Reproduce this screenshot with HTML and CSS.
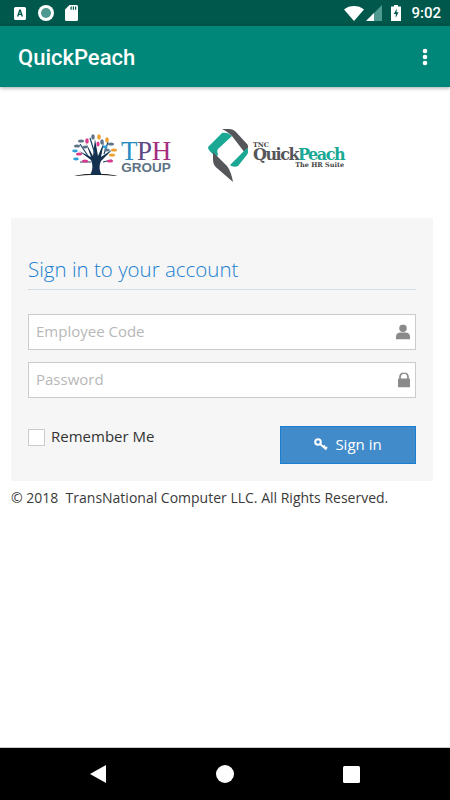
FILE: index.html
```html
<!DOCTYPE html>
<html lang="en">
<head>
  <meta charset="UTF-8">
  <meta name="viewport" content="width=device-width, initial-scale=1">
  <title>QuickPeach</title>
  <link rel="stylesheet" href="styles.css">
</head>
<body>
  <div class="phone">
    <div class="statusbar">
      <div class="status-left">
        <svg class="ic-a" width="12" height="13" viewBox="0 0 12 13"><path d="M1.500 0h9A1.500 1.500 0 0 1 12 1.500v10a1.500 1.500 0 0 1-1.500 1.500h-9A1.500 1.500 0 0 1 0 11.500v-10A1.500 1.500 0 0 1 1.500 0z" fill="#fff"/><path d="M5.200 2.500 3 9.500h1.500l.4-1.400h2.200l.4 1.400H9L6.800 2.500zM5.300 6.800 6 4.500l.7 2.300z" fill="#00574b"/></svg>
        <svg width="16" height="16" viewBox="0 0 16 16"><circle cx="8" cy="8" r="8" fill="#fff"/><circle cx="8" cy="8" r="5" fill="#4f9a90"/></svg>
        <svg width="13" height="16" viewBox="0 0 13 16"><path d="M4.500 0H11.500A1.500 1.500 0 0 1 13 1.500V14.500A1.500 1.500 0 0 1 11.500 16H1.500A1.500 1.500 0 0 1 0 14.500V4.500z" fill="#fff"/><path d="M5.500 1.500h1.200v3.300H5.500zM7.800 1.500H9v3.300H7.800zM10 1.500h1.200v3.300H10z" fill="#00574b"/></svg>
      </div>
      <div class="status-right">
        <svg width="20" height="15" viewBox="0 0 20 15"><path d="M0 3.500C5.500-1.100 14.500-1.100 20 3.500L10 15z" fill="#fff"/></svg>
        <svg class="ic-signal" width="16" height="16" viewBox="0 0 16 16"><path d="M16 0V16H0z" fill="#4f9a90"/><path d="M8 8V16H0z" fill="#fff"/></svg>
        <svg class="ic-batt" width="10" height="16" viewBox="0 0 10 16"><path d="M3 0h4v1.500h3V16H0V1.500h3z" fill="#fff"/><path d="M5.800 3.500 2.800 9h2v3.800L7.500 7.300H5.500z" fill="#00574b"/></svg>
        <span class="clock">9:02</span>
      </div>
    </div>

    <header class="appbar">
      <span class="appbar-title">QuickPeach</span>
      <svg width="6" height="18" viewBox="0 0 6 18"><circle cx="3" cy="3" r="2.300" fill="#fff"/><circle cx="3" cy="9" r="2.300" fill="#fff"/><circle cx="3" cy="15" r="2.300" fill="#fff"/></svg>
    </header>

    <main class="content">
      <div class="logos">
        <div class="logo-tph">
          <svg width="48" height="44" viewBox="0 0 48 44">
            <path d="M2 42c10-3 34-3 44 0-14-1.500-30-1.500-44 0z" fill="#222"/>
            <path d="M18 41c3-5 3-10 1-15L7 17l12 6-5-14 7 13 2-17 3 17 6-14-3 15 12-8-12 12c-2 5-2 9 1 14z" fill="#14304f"/>
            <path d="M19 28 8 28M31 28l9-2M16 22 8 10M32 20l4-12M23 20 18 4" stroke="#1c4468" stroke-width="1.200" fill="none"/>
            <g fill="#5d7488">
              <ellipse cx="9" cy="7" rx="3" ry="1.600"/><ellipse cx="21" cy="3" rx="1.800" ry="2.800"/><ellipse cx="30" cy="8" rx="1.800" ry="2.800"/><ellipse cx="39" cy="10" rx="3" ry="1.600"/><ellipse cx="5" cy="12" rx="3" ry="1.500"/><ellipse cx="13" cy="13" rx="2.800" ry="1.500"/><ellipse cx="35" cy="16" rx="2.800" ry="1.500"/>
            </g>
            <g fill="#d93a8e">
              <ellipse cx="15" cy="7" rx="1.800" ry="2.800"/><ellipse cx="7" cy="20" rx="3" ry="1.600"/><ellipse cx="13" cy="27" rx="3" ry="1.500"/><ellipse cx="38" cy="27" rx="3" ry="1.500"/><ellipse cx="26" cy="10" rx="1.600" ry="2.600"/>
            </g>
            <g fill="#eda02f">
              <ellipse cx="27" cy="3" rx="1.800" ry="2.800"/><ellipse cx="35" cy="6" rx="1.800" ry="2.800"/><ellipse cx="42" cy="16" rx="3" ry="1.600"/><ellipse cx="40" cy="21" rx="3" ry="1.500"/>
            </g>
            <g fill="#2d9ed8">
              <ellipse cx="3" cy="17" rx="2.800" ry="1.400"/><ellipse cx="4" cy="25" rx="2.800" ry="1.400"/><ellipse cx="33" cy="13" rx="2.600" ry="1.400"/>
            </g>
          </svg>
          <div class="tph-text">
            <div class="tph-big"><span class="tph-t">T</span><span class="tph-p">P</span><span class="tph-h">H</span></div>
            <div class="tph-small">GROUP</div>
          </div>
        </div>
        <div class="logo-qp">
          <svg width="41" height="53" viewBox="0 0 41 53">
            <path d="M0 18 14 4c3-1 7 0 10 3L10 20c-1 1-1 3 0 5l-1 3C4 25 0 21 0 18z" fill="#1aa894"/>
            <path d="M14 0h7c3 0 5 1 7 3l11 12c2 2 1 6-2 9L24 7c-3-3-6-5-10-7z" fill="#55565a"/>
            <path d="M39 19c2 3 1 6-1 8L30 37c-2 1-6 1-8-1l15-15z" fill="#1aa894"/>
            <path d="M5 23 19 37c3 4 5 10 6 16-5-4-10-9-15-13-3-2-5-5-5-9z" fill="#55565a"/>
          </svg>
          <div class="qp-text">
            <div class="qp-tnc">TNC</div>
            <div class="qp-name"><span class="qp-quick">Quick</span><span class="qp-peach">Peach</span></div>
            <div class="qp-sub">The HR Suite</div>
          </div>
        </div>
      </div>

      <section class="panel">
        <h2 class="panel-title">Sign in to your account</h2>
        <div class="field">
          <input type="text" placeholder="Employee Code">
          <svg class="field-ic" width="14" height="15" viewBox="0 0 15 16"><circle cx="7.500" cy="4" r="4" fill="#8a8a8a"/><path d="M0 16v-3.500C0 10 2.500 8.500 4.500 8.500h6c2 0 4.500 1.500 4.500 4V16z" fill="#8a8a8a"/></svg>
        </div>
        <div class="field">
          <input type="password" placeholder="Password">
          <svg class="field-ic" width="12" height="15" viewBox="0 0 12 15"><path d="M2 6.500V4.500a4 4 0 0 1 8 0v2" fill="none" stroke="#8a8a8a" stroke-width="1.700"/><rect y="6" width="12" height="9" rx="1" fill="#8a8a8a"/></svg>
        </div>
        <div class="actions">
          <label class="remember"><span class="checkbox"></span>Remember Me</label>
          <button class="signin" type="button">
            <svg width="14" height="13" viewBox="0 0 14 13"><circle cx="4" cy="4" r="2.800" fill="none" stroke="#fff" stroke-width="2"/><path d="M6 6l6.500 5.500M9.500 9l1.500-1.500M11.500 10.500 13 9" fill="none" stroke="#fff" stroke-width="1.800"/></svg>
            Sign in
          </button>
        </div>
      </section>

      <p class="copyright">© 2018&nbsp; TransNational Computer LLC. All Rights Reserved.</p>
    </main>

    <nav class="navbar">
      <svg width="16" height="18" viewBox="0 0 16 18"><path d="M16 0V18L0 9z" fill="#fff"/></svg>
      <svg width="18" height="18" viewBox="0 0 18 18"><circle cx="9" cy="9" r="9" fill="#fff"/></svg>
      <svg width="17" height="17" viewBox="0 0 17 17"><rect width="17" height="17" rx="1.500" fill="#fff"/></svg>
    </nav>
  </div>
</body>
</html>
```

FILE: styles.css
```css
* {
  box-sizing: border-box;
}
html, body {
  margin: 0;
  height: 100%;
}
body {
  font-family: "Open Sans", sans-serif;
  background: #fff;
  overflow: hidden;
}
.phone {
  height: 800px;
  display: flex;
  flex-direction: column;
}
.statusbar {
  height: 26px;
  background: #00574b;
  display: flex;
  justify-content: space-between;
  align-items: center;
  padding: 0 9px 0 14px;
}
.status-left {
  display: flex;
  align-items: center;
  gap: 11px;
}
.status-right {
  display: flex;
  align-items: center;
  gap: 2px;
}
.ic-a {
  margin-right: 1px;
}
.ic-batt {
  margin: 0 8px 0 7px;
}
.clock {
  font-family: Roboto, sans-serif;
  font-size: 15px;
  font-weight: 500;
  color: #fff;
}
.appbar {
  height: 61px;
  background: #00877a;
  display: flex;
  justify-content: space-between;
  align-items: center;
  padding: 0 22px 0 18px;
  box-shadow: 0 1px 4px rgba(0,0,0,0.35);
  position: relative;
}
.appbar-title {
  font-family: Roboto, sans-serif;
  font-size: 22px;
  font-weight: 500;
  line-height: 26px;
  color: #fff;
  padding-top: 2px;
}
.content {
  flex: 1;
  padding: 0 17px 0 11px;
}
.logos {
  height: 131px;
  display: flex;
  align-items: center;
  padding: 6px 0 0 61px;
  gap: 34px;
}
.logo-tph {
  display: flex;
  align-items: center;
  width: 102px;
  gap: 1px;
}
.tph-text {
  font-family: "Liberation Serif", serif;
  margin-top: 4px;
}
.tph-big {
  font-size: 27px;
  line-height: 21px;
  letter-spacing: -0.400px;
}
.tph-t {
  color: #2b8cc4;
}
.tph-p {
  color: #5b4a85;
}
.tph-h {
  color: #a52e7f;
}
.tph-small {
  font-family: "Liberation Sans", sans-serif;
  font-size: 13.500px;
  line-height: 12px;
  font-weight: 700;
  color: #5e7285;
  text-align: right;
}
.logo-qp {
  display: flex;
  align-items: center;
  gap: 4px;
}
.qp-text {
  font-family: "DejaVu Serif", serif;
  margin-top: 0;
}
.qp-tnc {
  font-size: 6.500px;
  line-height: 6px;
  font-weight: 700;
  color: #444;
}
.qp-name {
  font-size: 16px;
  line-height: 14px;
  font-weight: 700;
  letter-spacing: -1.500px;
}
.qp-quick {
  color: #55565a;
}
.qp-peach {
  color: #1aa894;
}
.qp-sub {
  font-size: 6.500px;
  line-height: 7px;
  font-weight: 700;
  color: #444;
  text-align: right;
}
.panel {
  height: 263px;
  background: #f6f6f6;
  padding: 37px 17px 0;
}
.panel-title {
  margin: 0 0 24px;
  padding-bottom: 5px;
  height: 35px;
  font-size: 20.500px;
  font-weight: 300;
  line-height: 29px;
  color: #1a7fd0;
  border-bottom: 1px solid #d5dde3;
}
.field {
  position: relative;
  margin-bottom: 12px;
}
.field input {
  display: block;
  width: 100%;
  height: 36px;
  padding: 0 30px 2px 7px;
  font-family: "Open Sans", sans-serif;
  font-size: 15px;
  background: #fff;
  border: 1px solid #ccc;
  border-radius: 0;
  outline: none;
}
.field input::placeholder {
  color: #b8b8b8;
  opacity: 1;
}
.field-ic {
  position: absolute;
  right: 6px;
  top: 50%;
  transform: translateY(-50%);
}
.actions {
  display: flex;
  justify-content: space-between;
  align-items: flex-start;
  margin-top: 28px;
}
.remember {
  display: flex;
  align-items: center;
  gap: 6px;
  font-size: 15px;
  line-height: 19px;
  color: #333;
  margin-top: 1px;
}
.checkbox {
  width: 17px;
  height: 17px;
  background: #fff;
  border: 1px solid #ccc;
  margin-top: 2px;
}
.signin {
  width: 136px;
  height: 38px;
  background: #428bca;
  border: 1px solid #1a7fd0;
  color: #fff;
  font-family: "Open Sans", sans-serif;
  font-size: 15px;
  display: flex;
  justify-content: center;
  align-items: center;
  gap: 7px;
  padding: 0 0 2px;
}
.copyright {
  margin: 7px 0 0;
  font-size: 14px;
  line-height: 20px;
  color: #3a3a3a;
  white-space: nowrap;
}
.navbar {
  height: 53px;
  background: #000;
  border-top: 1px solid #ccc;
  display: flex;
  align-items: center;
  padding: 0 90px;
  justify-content: space-between;
}
```
